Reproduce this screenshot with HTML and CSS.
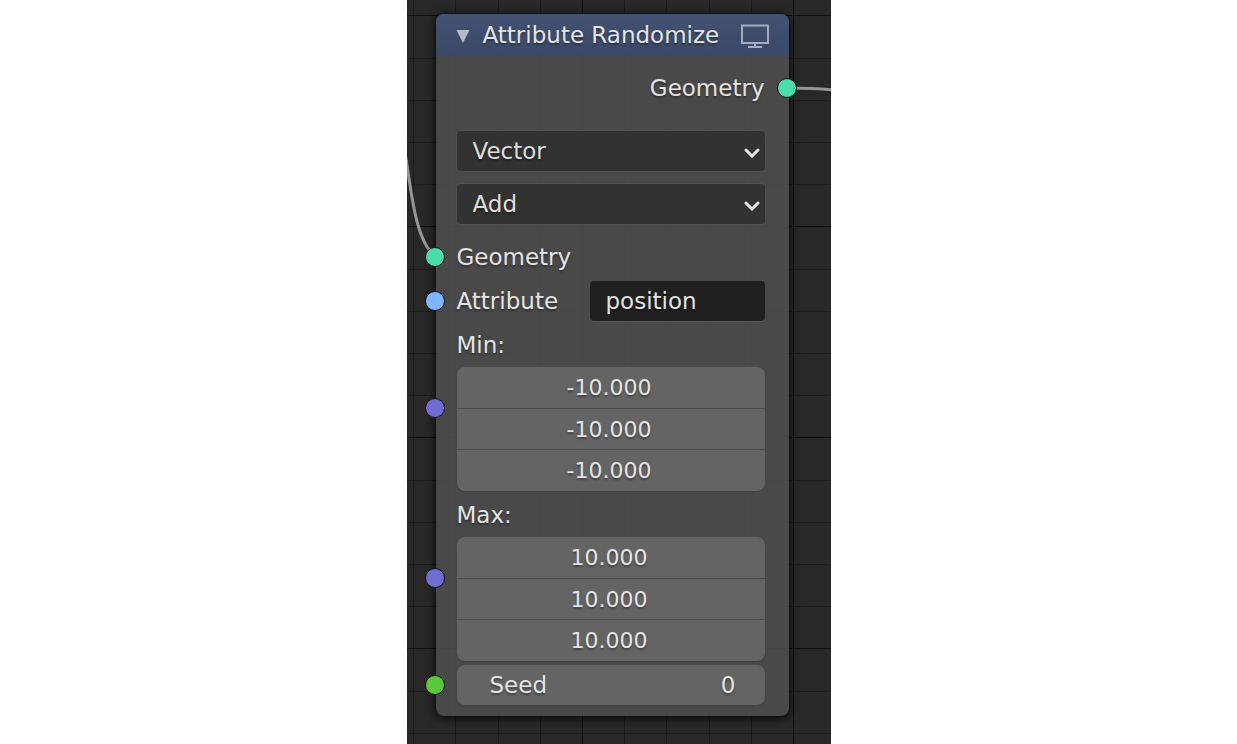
FILE: index.html
```
<!DOCTYPE html>
<html lang="en">
<head>
  <meta charset="UTF-8" />
  <meta name="viewport" content="width=device-width, initial-scale=1.0"/>
  <title>Attribute Randomize</title>
  <link rel="stylesheet" href="styles.css">
</head>
<body>

<main class="canvas">
  <svg class="backdrop" aria-hidden="true">
    <defs>
      <pattern id="grid" x="175" y="15" width="211" height="211" patternUnits="userSpaceOnUse">
        <path d="M42.5 0V211M84.5 0V211M127.5 0V211M169.5 0V211M0 43.5H211M0 85.5H211M0 127.5H211M0 169.5H211" stroke="#1b1b1b"/>
        <path d="M0.5 0V211M0 0.5H211" stroke="#101010"/>
      </pattern>
    </defs>
    <rect width="100%" height="100%" fill="url(#grid)"/>
    <g class="wires">
      <path d="M-1 158C5 200 10 242 28 256"/>
      <path d="M380 88C398 88 410 88 426 90"/>
    </g>
  </svg>

  <section class="node">
    <header class="node-header">
      <button type="button" class="collapse" aria-label="Collapse node">
        <svg width="14" height="18" viewBox="0 0 14 18"><path d="M0.5 4H13.5L7 17Z" fill="#b4bac8"/></svg>
      </button>
      <h1>Attribute Randomize</h1>
      <button type="button" class="preview" aria-label="Preview">
        <svg width="30" height="26" viewBox="0 0 30 26" fill="none" stroke="#a3abbd" stroke-width="2">
          <path d="M2 3.5H28V21H2Z"/>
          <path d="M15 21V25M8 25H22"/>
        </svg>
      </button>
    </header>

    <div class="node-body">
      <div class="row output">
        <span>Geometry</span>
        <i class="socket geometry right"></i>
      </div>

      <div class="dropdown">
        <select aria-label="Data type">
          <option>Vector</option>
        </select>
        <svg class="chevron" width="16" height="10" viewBox="0 0 16 10"><path d="M2 2L8 8L14 2"/></svg>
      </div>
      <div class="dropdown">
        <select aria-label="Operation">
          <option>Add</option>
        </select>
        <svg class="chevron" width="16" height="10" viewBox="0 0 16 10"><path d="M2 2L8 8L14 2"/></svg>
      </div>

      <div class="row">
        <i class="socket geometry"></i>
        <span>Geometry</span>
      </div>

      <div class="row">
        <i class="socket string"></i>
        <label for="attribute">Attribute</label>
        <input type="text" id="attribute" class="text-field" value="position">
      </div>

      <div class="row" id="min-label">Min:</div>
      <div class="vector" role="group" aria-labelledby="min-label">
        <i class="socket vec"></i>
        <input type="text" aria-label="Min X" value="-10.000">
        <input type="text" aria-label="Min Y" value="-10.000">
        <input type="text" aria-label="Min Z" value="-10.000">
      </div>

      <div class="row" id="max-label">Max:</div>
      <div class="vector" role="group" aria-labelledby="max-label">
        <i class="socket vec"></i>
        <input type="text" aria-label="Max X" value="10.000">
        <input type="text" aria-label="Max Y" value="10.000">
        <input type="text" aria-label="Max Z" value="10.000">
      </div>

      <div class="row seed">
        <i class="socket int"></i>
        <label for="seed">Seed</label>
        <input type="text" id="seed" value="0">
      </div>
    </div>
  </section>
</main>

</body>
</html>
```
FILE: styles.css
```
* {
  margin: 0;
  padding: 0;
  box-sizing: border-box;
}

body {
  background: #fff;
  color: #e4e4e4;
  font-family: "DejaVu Sans", sans-serif;
  font-size: 23px;
}

input, select, button {
  font: inherit;
  color: inherit;
  text-shadow: inherit;
  border: none;
  outline: none;
  background: none;
  min-width: 0;
}

.canvas {
  position: relative;
  max-width: 424px;
  min-height: 100vh;
  margin: 0 auto;
  padding: 14px 42px 27px 29px;
  background: #282828;
  overflow: hidden;
}

.backdrop {
  position: absolute;
  inset: 0;
  width: 100%;
  height: 100%;
}

.wires {
  fill: none;
  stroke: #969696;
  stroke-width: 3;
}

.node {
  position: relative;
  border-radius: 8px;
  background: rgba(77, 77, 77, 0.9);
  box-shadow: 0 2px 8px 2px rgba(0, 0, 0, 0.6), 0 0 1px 1px rgba(0, 0, 0, 0.3);
  text-shadow: 0 2px 2px rgba(0, 0, 0, 0.35);
}

.node-header {
  display: flex;
  align-items: center;
  height: 41px;
  padding: 0 19px 0 20px;
  border-radius: 8px 8px 0 0;
  background: linear-gradient(#435173, #3b4967);
}

.node-header h1 {
  flex: 1;
  font-size: 23px;
  font-weight: normal;
  white-space: nowrap;
}

.collapse,
.preview {
  display: flex;
}

.collapse {
  margin-right: 13px;
}

.node-body {
  padding: 13px 24px 11px 21px;
}

.row {
  position: relative;
  display: flex;
  align-items: center;
  height: 40px;
  margin-bottom: 4px;
}

.row.output {
  justify-content: flex-end;
  margin-bottom: 23px;
}

.dropdown {
  position: relative;
  margin-bottom: 13px;
}

.dropdown select {
  display: block;
  width: 100%;
  height: 40px;
  padding: 0 16px;
  appearance: none;
  border-radius: 4px;
  background: #323232;
  box-shadow: 0 0 0 1px #505050;
  color: #dedede;
}

.chevron {
  position: absolute;
  right: 5px;
  top: 17px;
  fill: none;
  stroke: #e8e8e8;
  stroke-width: 3;
  stroke-linecap: round;
  pointer-events: none;
}

.text-field {
  width: 175px;
  height: 40px;
  margin-left: auto;
  padding: 0 16px;
  border-radius: 4px;
  background: #202020;
  box-shadow: 0 1px 0 #5a5a5a;
}

.vector {
  position: relative;
  display: flex;
  flex-direction: column;
  height: 124px;
  margin: -2px 0 4px;
  border-radius: 8px;
  background: #646464;
  box-shadow: 0 1px 1px #404040;
}

.vector input {
  flex: 1;
  padding-right: 3px;
  border-bottom: 1px solid #4b4b4b;
  font-size: 22px;
  text-align: center;
}

.vector input:last-of-type {
  border-bottom: none;
}

.row.seed {
  margin-bottom: 0;
  padding: 0 29px 0 33px;
  border-radius: 8px;
  background: #646464;
  box-shadow: 0 1px 1px #404040;
}

.seed input {
  flex: 1;
  text-align: right;
}

.socket {
  position: absolute;
  left: -32px;
  top: 50%;
  width: 20px;
  height: 20px;
  margin-top: -10px;
  border: 1px solid #141414;
  border-radius: 50%;
}

.socket.right {
  left: auto;
  right: -32px;
}

.socket.geometry {
  background: #49dbaa;
}

.socket.string {
  background: #80b5ff;
}

.socket.vec {
  top: 33%;
  background: #6f6cd2;
}

.socket.int {
  background: #5bc83c;
}
```
